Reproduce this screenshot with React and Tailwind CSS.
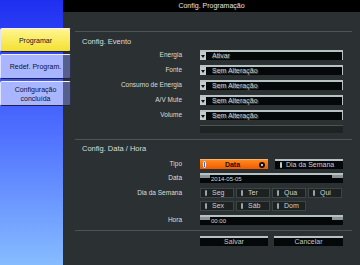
import React from 'react';

const font = { fontFamily: '"Liberation Sans", Arial, sans-serif' };

const Dropdown = ({ value }) => (
  <div className="flex h-[10px] w-[143px] border-t-2 border-r border-[#b8c2c2] bg-[#050808]">
    <div className="flex w-[6px] items-center justify-center bg-[#c4cccc]">
      <div className="h-0 w-0 border-x-[2px] border-t-[3px] border-x-transparent border-t-[#111]" />
    </div>
    <span className="ml-[6px] text-[7px] leading-[8px] text-[#c8d0d0] [text-shadow:1px_1px_0_#555]">{value}</span>
  </div>
);

const Pill = ({ color = 'bg-[#9aa2a2]' }) => (
  <span className={`inline-block h-[6px] w-[2px] rounded-full ${color}`} />
);

const DayCheck = ({ day }) => (
  <div className="flex h-[10px] w-[34px] items-center gap-[5px] border border-[#3c4444] bg-[#1c2222] pl-[4px]">
    <Pill />
    <span className="text-[7px] leading-[8px] text-[#c8d0d0]">{day}</span>
  </div>
);

const Row = ({ label, children, className = '' }) => (
  <div className={`flex h-[10px] items-center ${className}`}>
    <div className="w-[107px] text-right text-[6.5px] leading-[8px] text-[#d8dede]">{label}</div>
    <div className="ml-[18px]">{children}</div>
  </div>
);

const DarkButton = ({ label, w }) => (
  <div className={`flex h-[10px] ${w} items-center justify-center border-t-2 border-[#b8c2c2] bg-[#050808] text-[7px] leading-[8px] text-[#c0c8c8]`}>
    {label}
  </div>
);

const SideButton = ({ label, active, h }) => (
  <div
    className={`relative z-10 flex ${h} w-[71px] items-center justify-center rounded-[2px] border border-t-[#f0f0ff] border-l-[#e0e4ff] border-b-[#202040] border-r-[#30304a] text-center text-[7px] leading-[9px] text-[#101030] ${
      active
        ? 'bg-[linear-gradient(to_bottom,#fff690,#f4e030)]'
        : 'bg-[linear-gradient(to_right,#a9b6ff_62px,#56608e_62px)]'
    }`}
  >
    {label}
  </div>
);

export default function App() {
  return (
    <div style={font} className="flex h-[265px] w-[360px] overflow-hidden bg-[#2b3132]">
      {/* sidebar */}
      <div className="flex w-[63px] shrink-0 flex-col gap-[2px] bg-[linear-gradient(to_bottom,#1f2ff0,#4f70ff_50%,#86bcff)] pt-[28px]">
        <SideButton label="Programar" active h="h-[24px]" />
        <SideButton label="Redef. Program." h="h-[25px]" />
        <SideButton label={<>Configuração<br />concluída</>} h="h-[25px]" />
      </div>

      {/* main panel */}
      <div className="flex flex-1 flex-col">
        <div className="flex h-[12px] items-center justify-center bg-black text-[7px] leading-[8px] text-[#e0e6e6]">
          Config. Programação
        </div>

        <div className="flex flex-col pl-[12px] pr-[8px]">
          <div className="mt-[19px] h-px bg-[#4c5454]" />
          <div className="h-[18px] pl-[7px] pt-[6px] text-[7.5px] leading-[8px] text-[#d8dede]">Config. Evento</div>

          <div className="flex flex-col gap-[5px]">
            <Row label="Energia"><Dropdown value="Ativar" /></Row>
            <Row label="Fonte"><Dropdown value="Sem Alteração" /></Row>
            <Row label="Consumo de Energia"><Dropdown value="Sem Alteração" /></Row>
            <Row label="A/V Mute"><Dropdown value="Sem Alteração" /></Row>
            <Row label="Volume"><Dropdown value="Sem Alteração" /></Row>
          </div>
          <div className="ml-[125px] mt-[5px] h-[8px] w-[143px] border-t border-[#4a5252] bg-[#1e2424]" />

          <div className="mt-[6px] h-px bg-[#4c5454]" />
          <div className="h-[19px] pl-[7px] pt-[5px] text-[7.5px] leading-[8px] text-[#d8dede]">Config. Data / Hora</div>

          <Row label="Tipo">
            <div className="flex gap-[7px]">
              <div className="flex h-[10px] w-[68px] items-center border-t border-[#ffb070] bg-[linear-gradient(to_bottom,#ff8a20,#f05a00)] px-[3px]">
                <span className="inline-block h-[7px] w-[3px] rounded-full border border-white bg-[#2a70ff]" />
                <span className="flex-1 text-center text-[7px] font-bold leading-[8px] text-[#201000]">Data</span>
                <span className="flex h-[6px] w-[6px] items-center justify-center rounded-full bg-[#111]">
                  <span className="h-[2px] w-[2px] rounded-full bg-white" />
                </span>
              </div>
              <div className="flex h-[10px] w-[68px] items-center gap-[4px] border-t-2 border-[#b8c2c2] bg-[#050808] pl-[5px]">
                <Pill color="bg-[#c0c8c8]" />
                <span className="text-[7px] leading-[8px] text-[#c8d0d0]">Dia da Semana</span>
              </div>
            </div>
          </Row>

          <Row label="Data" className="mt-[4px]">
            <div className="relative flex h-[10px] w-[143px] items-center border-t-2 border-[#b8c2c2] bg-[#050808]">
              <div className="absolute left-0 top-0 h-[3px] w-[10px] bg-[#8a9494]" />
              <div className="absolute right-0 top-0 h-[3px] w-[11px] bg-[#8a9494]" />
              <span className="ml-[11px] text-[6px] leading-[8px] text-[#d0d8d8]">2014-05-05</span>
            </div>
          </Row>

          <Row label="Dia da Semana" className="mt-[5px]">
            <div className="flex gap-[2px]">
              <DayCheck day="Seg" />
              <DayCheck day="Ter" />
              <DayCheck day="Qua" />
              <DayCheck day="Qui" />
            </div>
          </Row>
          <Row label="" className="mt-[3px]">
            <div className="flex gap-[2px]">
              <DayCheck day="Sex" />
              <DayCheck day="Sáb" />
              <DayCheck day="Dom" />
            </div>
          </Row>

          <Row label="Hora" className="mt-[4px]">
            <div className="relative flex h-[10px] w-[143px] items-center border-t-2 border-[#b8c2c2] bg-[#050808]">
              <div className="absolute left-0 top-0 h-[3px] w-[10px] bg-[#8a9494]" />
              <div className="absolute right-0 top-0 h-[3px] w-[11px] bg-[#8a9494]" />
              <span className="ml-[11px] text-[6px] leading-[8px] text-[#d0d8d8]">00:00</span>
            </div>
          </Row>

          <div className="mt-[5px] h-px bg-[#4c5454]" />

          <div className="ml-[125px] mt-[5px] flex gap-[6px]">
            <DarkButton label="Salvar" w="w-[68px]" />
            <DarkButton label="Cancelar" w="w-[69px]" />
          </div>
        </div>
      </div>
    </div>
  );
}
